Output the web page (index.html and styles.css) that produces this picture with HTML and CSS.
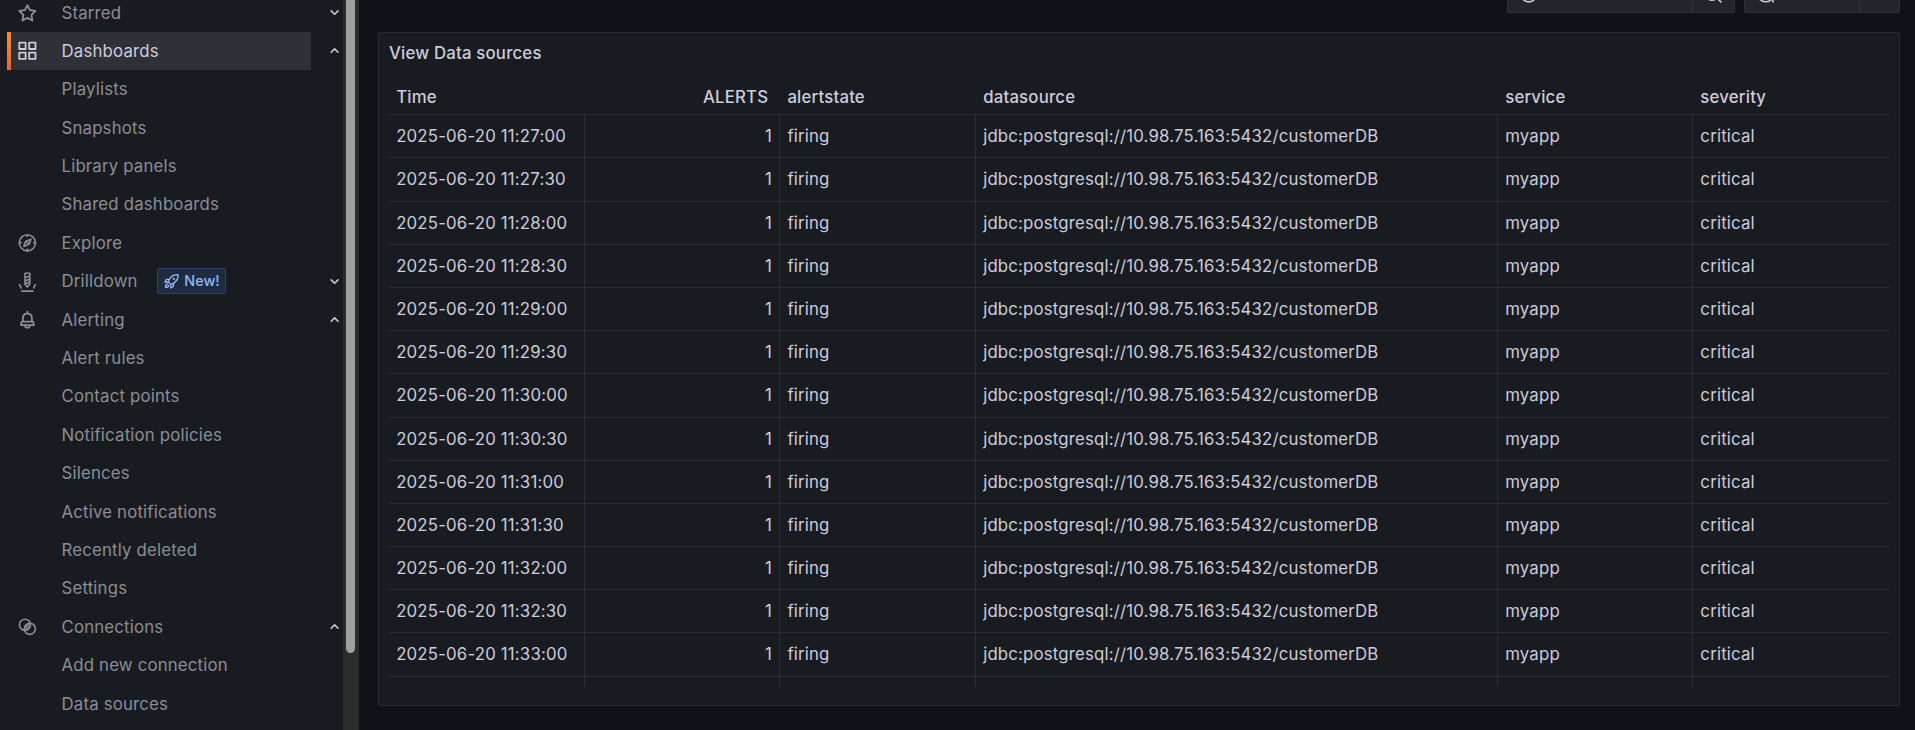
FILE: index.html
```
<!DOCTYPE html>
<html lang="en">
<head>
<meta charset="utf-8">
<title>View Data sources</title>
<link rel="stylesheet" href="styles.css">
</head>
<body>
<svg width="0" height="0" class="defs">
  <symbol id="star" viewBox="0 0 24 24"><path d="M22,9.67A1,1,0,0,0,21.14,9l-5.69-.83L12.9,3a1,1,0,0,0-1.8,0L8.55,8.16,2.86,9a1,1,0,0,0-.81.68,1,1,0,0,0,.25,1l4.13,4-1,5.68A1,1,0,0,0,6.9,21.44L12,18.77l5.1,2.67a.93.93,0,0,0,.46.12,1,1,0,0,0,.59-.19,1,1,0,0,0,.4-1l-1-5.68,4.13-4A1,1,0,0,0,22,9.67Zm-6.15,4a1,1,0,0,0-.29.88l.72,4.2-3.76-2a1.06,1.06,0,0,0-.94,0l-3.76,2,.72-4.2a1,1,0,0,0-.29-.88l-3-3,4.21-.61a1,1,0,0,0,.76-.55L12,5.7l1.88,3.82a1,1,0,0,0,.76.55l4.21.61Z"/></symbol>
  <symbol id="apps" viewBox="0 0 24 24"><path d="M10,13H3a1,1,0,0,0-1,1v7a1,1,0,0,0,1,1h7a1,1,0,0,0,1-1V14A1,1,0,0,0,10,13ZM9,20H4V15H9ZM21,2H14a1,1,0,0,0-1,1v7a1,1,0,0,0,1,1h7a1,1,0,0,0,1-1V3A1,1,0,0,0,21,2ZM20,9H15V4h5Zm1,4H14a1,1,0,0,0-1,1v7a1,1,0,0,0,1,1h7a1,1,0,0,0,1-1V14A1,1,0,0,0,21,13Zm-1,7H15V15h5ZM10,2H3A1,1,0,0,0,2,3v7a1,1,0,0,0,1,1h7a1,1,0,0,0,1-1V3A1,1,0,0,0,10,2ZM9,9H4V4H9Z"/></symbol>
  <symbol id="bell" viewBox="0 0 24 24"><path d="M18,13.18V10a6,6,0,0,0-5-5.91V3a1,1,0,0,0-2,0V4.09A6,6,0,0,0,6,10v3.18A3,3,0,0,0,4,16v2a1,1,0,0,0,1,1H8.14a4,4,0,0,0,7.72,0H19a1,1,0,0,0,1-1V16A3,3,0,0,0,18,13.18ZM8,10a4,4,0,0,1,8,0v3H8Zm4,10a2,2,0,0,1-1.72-1h3.44A2,2,0,0,1,12,20Zm6-3H6V16a1,1,0,0,1,1-1H17a1,1,0,0,1,1,1Z"/></symbol>
  <symbol id="compass" viewBox="0 0 24 24"><g class="line"><circle cx="12" cy="12" r="9"/><path d="M16 8l-2 5.500L8 16l2-5.500ZM14 13.500L10.200 10.200M12 3v2M12 19v2M3 12h2M19 12h2"/></g></symbol>
  <symbol id="drill" viewBox="0 0 24 24"><g class="line"><path d="M9.300 2.500h5.400v12L12 17.800l-2.700-3.300ZM9.300 7.500l5.400-2M9.300 11l5.400-2M9.300 14.500l5.400-2.500M5.800 22.400h12.400M3.300 15.200l1.700 3.600M20.700 15.200L19 18.800"/></g></symbol>
  <symbol id="links" viewBox="0 0 24 24"><g class="line"><circle cx="9.300" cy="9.800" r="6.200"/><circle cx="14.700" cy="14.200" r="6.200"/><path d="M10 12.600l3.600-3M10.800 15l4.400-3.600"/></g></symbol>
  <symbol id="rocket" viewBox="0 0 24 24"><g class="line"><path d="M21.500 2.500C15 2 10.500 5 7.500 12.500l4 4C19 13.500 22 9 21.500 2.500ZM9.500 9H5l-2.500 4 5-.5M15 14.500V19l-4 2.500.5-5M6.500 15.500c-2 .5-3 2.500-3 5 2.500 0 4.500-1 5-3"/><circle cx="15.500" cy="8.500" r=".7"/></g></symbol>
  <symbol id="down" viewBox="0 0 24 24"><path d="M17,9.17a1,1,0,0,0-1.41,0L12,12.71,8.46,9.17a1,1,0,0,0-1.41,0,1,1,0,0,0,0,1.42l4.24,4.24a1,1,0,0,0,1.42,0L17,10.590A1,1,0,0,0,17,9.170Z"/></symbol>
  <symbol id="clock" viewBox="0 0 24 24"><g class="line"><circle cx="12" cy="12" r="9"/><path d="M12 7v5h3"/></g></symbol>
  <symbol id="zoomout" viewBox="0 0 24 24"><g class="line"><circle cx="11" cy="11" r="8"/><path d="M17 17l4 4M8 11h6"/></g></symbol>
  <symbol id="sync" viewBox="0 0 24 24"><g class="line"><path d="M20 9a9 9 0 0 0-16 0V4M4 16a9 9 0 0 0 16 0v5M20 16h-5"/></g></symbol>
</svg>
<div class="app">
  <nav class="sidebar">
    <ul class="menu" id="menu">
      <li class="item"><svg class="icon"><use href="#star"/></svg><span>Starred</span><svg class="chev"><use href="#down"/></svg></li>
      <li class="item active"><svg class="icon"><use href="#apps"/></svg><span>Dashboards</span><svg class="chev up"><use href="#down"/></svg></li>
      <li class="item"><span>Playlists</span></li>
      <li class="item"><span>Snapshots</span></li>
      <li class="item"><span>Library panels</span></li>
      <li class="item"><span>Shared dashboards</span></li>
      <li class="item"><svg class="icon"><use href="#compass"/></svg><span>Explore</span></li>
      <li class="item"><svg class="icon"><use href="#drill"/></svg><span>Drilldown</span><b class="badge"><svg><use href="#rocket"/></svg>New!</b><svg class="chev"><use href="#down"/></svg></li>
      <li class="item"><svg class="icon"><use href="#bell"/></svg><span>Alerting</span><svg class="chev up"><use href="#down"/></svg></li>
      <li class="item"><span>Alert rules</span></li>
      <li class="item"><span>Contact points</span></li>
      <li class="item"><span>Notification policies</span></li>
      <li class="item"><span>Silences</span></li>
      <li class="item"><span>Active notifications</span></li>
      <li class="item"><span>Recently deleted</span></li>
      <li class="item"><span>Settings</span></li>
      <li class="item"><svg class="icon"><use href="#links"/></svg><span>Connections</span><svg class="chev up"><use href="#down"/></svg></li>
      <li class="item"><span>Add new connection</span></li>
      <li class="item"><span>Data sources</span></li>
    </ul>
    <div class="track"><div class="thumb"></div></div>
  </nav>
  <main class="main">
    <div class="toolbar">
      <div class="group"><div class="btn range"><svg><use href="#clock"/></svg></div><div class="btn zoom"><svg><use href="#zoomout"/></svg></div></div>
      <div class="group"><div class="btn refresh"><svg><use href="#sync"/></svg></div><div class="btn interval"></div></div>
    </div>
    <section class="panel">
      <h2 class="title">View Data sources</h2>
      <div class="table">
        <div class="row head"><div>Time</div><div class="num">ALERTS</div><div>alertstate</div><div>datasource</div><div>service</div><div>severity</div></div>
        <div class="body" id="rows"></div>
      </div>
    </section>
  </main>
</div>
<script src="rows.js"></script>
</body>
</html>
```
FILE: styles.css
```
* { box-sizing: border-box; }
body {
  margin: 0;
  height: 730px;
  overflow: hidden;
  background: #111217;
  color: #ccccdc;
  font: 400 16.8px/1.5714 Inter, "Liberation Sans", sans-serif;
  letter-spacing: 0.18px;
}
.defs { position: absolute; }
svg { fill: currentColor; flex: none; }
.line { fill: none; stroke: currentColor; stroke-width: 1.8; stroke-linecap: round; stroke-linejoin: round; }
.app { display: flex; height: 730px; }
.sidebar { display: flex; width: 359px; background: #181b1f; overflow: hidden; }
.menu { list-style: none; margin: -6.5px 0 0; padding: 0 0 0 7px; width: 344px; flex: none; }
.item {
  display: grid;
  grid-template-columns: 54.5px auto 1fr 19.2px;
  align-items: center;
  height: 38.4px;
  color: #8c8d97;
}
.item span { grid-column: 2; grid-row: 1; }
.icon { grid-column: 1; grid-row: 1; width: 21.6px; height: 21.6px; margin-left: 9px; transform: translateX(0.6px); }
.chev { grid-column: 4; grid-row: 1; width: 19.2px; height: 19.2px; color: #ccccdc; }
.up { transform: scaleY(-1); }
.active {
  color: #ccccdc;
  background:
    linear-gradient(#ff8833, #f55f3e) 0 0 / 4px 100% no-repeat,
    linear-gradient(#2e3136, #2e3136) 0 0 / 304px 100% no-repeat;
}
.badge {
  grid-column: 3;
  grid-row: 1;
  justify-self: start;
  display: flex;
  align-items: center;
  gap: 4.8px;
  width: 69px;
  height: 26px;
  margin-left: 19px;
  padding: 0 5px;
  border: 1px solid #2b4270;
  border-radius: 2px;
  background: #202b3d;
  color: #94b8f8;
  font-size: 14.4px;
  font-weight: 500;
  letter-spacing: 0;
}
.badge svg { width: 16.8px; height: 16.8px; }
.track { width: 16px; margin-left: -1px; background: #2c2c2c; padding-left: 3px; }
.thumb { width: 9px; height: 653px; border-radius: 0 0 5px 5px; background: #9f9f9f; }
.main { flex: 1; min-width: 0; padding: 0 15px 0 19px; }
.toolbar { display: flex; justify-content: flex-end; gap: 9px; height: 32px; overflow: hidden; }
.group { display: flex; height: 38px; margin-top: -25px; border: 1px solid #303137; border-radius: 2px; background: #24252b; }
.btn { display: flex; align-items: center; }
.btn + .btn { border-left: 1px solid #34353b; }
.btn svg { width: 21.6px; height: 21.6px; }
.range { width: 184px; padding-left: 10px; }
.zoom { width: 42px; padding-left: 9px; }
.refresh { width: 114px; padding-left: 10px; }
.interval { width: 40px; }
.panel { height: 674px; padding: 0 10px; background: #181b1f; border: 1px solid #2b2d32; border-radius: 2px; }
.title { margin: 0; height: 39px; font-size: 16.8px; font-weight: 500; line-height: 40px; }
.table { height: 615px; overflow: hidden; }
.row { display: grid; grid-template-columns: 196px 195.2px 195.8px 522px 195.2px 1fr; height: 43.2px; border-bottom: 1px solid #2c2e33; }
.row > div { padding: 0 7.2px; line-height: 42.5px; border-right: 1px solid #2c2e33; white-space: nowrap; }
.row > div:last-child { border-right: 0; }
.row .num { text-align: right; }
.row > div:first-child { padding-left: 7.2px; }
.head { font-weight: 500; }
.row.head > div { border-color: transparent; line-height: 51px; }
.row.head .num { padding-right: 11px; }
```
FILE: rows.js
```
var rows = document.getElementById("rows");
for (var i = 0; i < 14; i++) {
  var row = document.createElement("div");
  row.className = "row";
  var seconds = 27 * 60 + i * 30;
  var time = "2025-06-20 11:" + Math.floor(seconds / 60) + ":" + (seconds % 60 ? "30" : "00");
  var values = [time, "1", "firing", "jdbc:postgresql://10.98.75.163:5432/customerDB", "myapp", "critical"];
  values.forEach(function (value, column) {
    var cell = document.createElement("div");
    if (column === 1) cell.className = "num";
    cell.textContent = i < 13 ? value : "";
    row.appendChild(cell);
  });
  rows.appendChild(row);
}
```
